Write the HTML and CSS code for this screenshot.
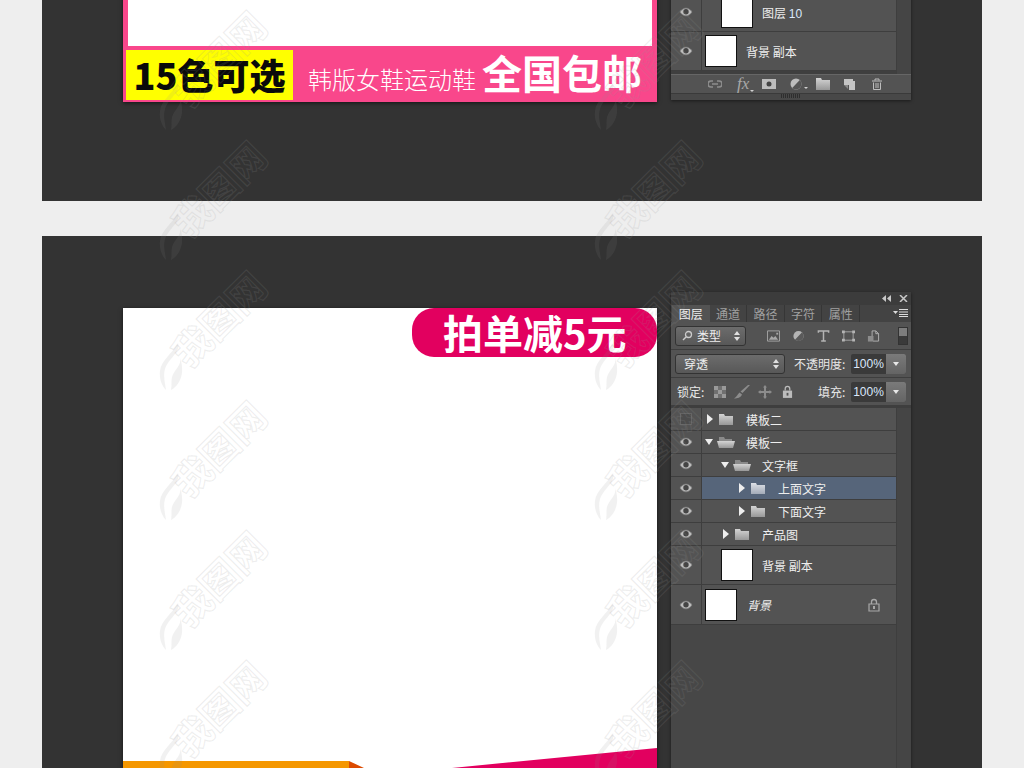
FILE: index.html
```html
<!DOCTYPE html>
<html lang="zh-CN">
<head>
  <meta charset="UTF-8" />
  <title>模板预览</title>
  <link rel="stylesheet" href="styles.css">
</head>
<body>

  <!-- Icons -->
  <svg class="sprite" xmlns="http://www.w3.org/2000/svg">
    <defs>
      <linearGradient id="folderFill" x1="0" y1="0" x2="0" y2="1"><stop offset="0" stop-color="#d4d4d4"/><stop offset="1" stop-color="#989898"/></linearGradient>
      <linearGradient id="folderBlue" x1="0" y1="0" x2="0" y2="1"><stop offset="0" stop-color="#dde0e6"/><stop offset="1" stop-color="#a3abb8"/></linearGradient>
    </defs>
    <symbol id="eye" viewBox="0 0 14 10">
      <path d="M1 5c1.800-2.600 3.800-3.800 6-3.800S11.200 2.400 13 5c-1.800 2.600-3.800 3.800-6 3.800S2.800 7.600 1 5z" fill="#bdbdbd" stroke="#858585" stroke-width=".8"/>
      <circle cx="7" cy="4.800" r="2.700" fill="#444"/>
    </symbol>
    <symbol id="folder" viewBox="0 0 18 13">
      <path d="M2 1h5l1 2h8v9H2z" fill="url(#folderFill)"/>
    </symbol>
    <symbol id="folderSel" viewBox="0 0 18 13">
      <path d="M2 1h5l1 2h8v9H2z" fill="url(#folderBlue)"/>
    </symbol>
    <symbol id="folderOpen" viewBox="0 0 18 13">
      <path d="M2 1h5l1 2h7v2H2z" fill="#8a8a8a"/>
      <path d="M0 5h18l-2 7H2z" fill="url(#folderFill)"/>
    </symbol>
    <symbol id="thumbLock" viewBox="0 0 12 14">
      <path d="M3.500 6V4a2.500 2.500 0 0 1 5 0v2" fill="none" stroke="#a8a8a8" stroke-width="1.300"/>
      <path d="M1 6h10v7H1z" fill="none" stroke="#a8a8a8" stroke-width="1.200"/>
      <rect x="5" y="8" width="2" height="3" fill="#a8a8a8"/>
    </symbol>
    <symbol id="flame" viewBox="0 0 24 50">
      <path d="M19 1C22 10 9 17 6 27c-2 7 0 13 1 21C3 44 0 37 1 29 2 18 14 11 19 1zM21 16c2 7-6 12-8 19-1 4 0 8-1 13 6-3 10-10 11-17 .5-6-.5-11-2-15z" fill="currentColor"/>
    </symbol>
  </svg>

  <!-- First artboard, scrolled past its top -->
  <section class="board board-top">
    <div class="canvas canvas-top">
      <div class="canvas-white"></div>
      <div class="promo-strip">
        <div class="promo-colors">15色可选</div>
        <div class="promo-sub">韩版女鞋运动鞋</div>
        <div class="promo-free">全国包邮</div>
      </div>
    </div>

    <div class="panel panel-top">
      <div class="layer-area">
        <div class="layer-list">
          <div class="row row-thumb">
            <div class="eye-col"><svg class="eye"><use href="#eye"/></svg></div>
            <div class="row-body indent-1"><div class="thumb"></div><span class="thumb-name">图层 <span class="digits">10</span></span></div>
          </div>
          <div class="row row-thumb">
            <div class="eye-col"><svg class="eye"><use href="#eye"/></svg></div>
            <div class="row-body"><div class="thumb"></div><span class="thumb-name">背景 副本</span></div>
          </div>
        </div>
        <div class="track"></div>
      </div>
      <div class="panel-footer">
        <svg class="foot-icon" viewBox="0 0 14 12"><path d="M5 3H3a3 3 0 0 0 0 6h2M9 3h2a3 3 0 0 1 0 6H9M4 6h6" fill="none" stroke="#8d8d8d" stroke-width="1.600"/></svg>
        <span class="foot-fx">fx<i class="caret"></i></span>
        <svg class="foot-icon" viewBox="0 0 14 12"><path d="M0 1h14v10H0z" fill="#bdbdbd"/><circle cx="7" cy="6" r="2.500" fill="#444"/></svg>
        <span class="foot-adjust"><svg class="foot-icon" viewBox="0 0 14 12"><circle cx="7" cy="6" r="5.500" fill="#bdbdbd"/><path d="M3.200 10 10.800 2a5.500 5.500 0 0 1-7.600 8z" fill="#555"/></svg><i class="caret"></i></span>
        <svg class="foot-icon" viewBox="0 0 14 12"><path d="M0 0h5l1 2h8v10H0z" fill="url(#folderFill)"/></svg>
        <svg class="foot-icon" viewBox="0 0 14 12"><path d="M1 1h9v2h2v9H6V7H1z" fill="#c4c4c4"/><path d="M1 7h4v4z" fill="#8a8a8a"/></svg>
        <svg class="foot-icon" viewBox="0 0 14 12"><path d="M2 3h10M5 2.500V1h4v1.500M3.500 4.500v7h7v-7M6 5v5M8 5v5" fill="none" stroke="#bdbdbd" stroke-width="1"/></svg>
        <span class="foot-resize"></span>
      </div>
      <div class="panel-grip"><span></span></div>
    </div>
  </section>

  <div class="board-gap"></div>

  <!-- Second artboard -->
  <section class="board board-main">
    <div class="canvas canvas-main">
      <div class="promo-pill">拍单减5元</div>
      <div class="canvas-ribbons">
        <svg class="ribbons" viewBox="0 0 534 20" preserveAspectRatio="none">
          <path d="M0 13h226v7H0z" fill="#f59700"/>
          <path d="M226 13l15 7h-15z" fill="#dc4a00"/>
          <path d="M329 20 534 0v20z" fill="#e2005f"/>
        </svg>
      </div>
    </div>

    <div class="panel panel-main">
      <div class="panel-title">
        <svg class="title-icon" viewBox="0 0 9 7"><path d="M4 0v7L0 3.500zM9 0v7L5 3.500z" fill="#c8c8c8"/></svg>
        <svg class="title-icon" viewBox="0 0 9 7"><path d="M1 0l7 7M8 0 1 7" stroke="#c8c8c8" stroke-width="1.500"/></svg>
      </div>

      <div class="tabs">
        <div class="tab tab-active">图层</div>
        <div class="tab">通道</div>
        <div class="tab">路径</div>
        <div class="tab">字符</div>
        <div class="tab">属性</div>
        <svg class="tab-menu" viewBox="0 0 15 8"><path d="M0 2h5L2.500 5z" fill="#ddd"/><path d="M6 .5h9M6 3h9M6 5.500h9M6 7.500h9" stroke="#ddd"/></svg>
      </div>

      <div class="tool-row">
        <div class="select select-kind">
          <svg class="search" viewBox="0 0 11 11"><circle cx="6.500" cy="4.500" r="3" fill="none" stroke="#ccc" stroke-width="1.300"/><path d="M4 7 1 10" stroke="#ccc" stroke-width="1.500"/></svg>
          <span>类型</span>
          <i class="updown"></i>
        </div>
        <div class="filter-icons">
          <svg viewBox="0 0 14 12"><path d="M.5.5h13v11H.5z" fill="none" stroke="#a8a8a8"/><path d="M2 10l3-4 2 2 2-2 3 4z" fill="#a8a8a8"/><path d="M10 2.500h2v2h-2z" fill="#a8a8a8"/></svg>
          <svg viewBox="0 0 14 12"><circle cx="7" cy="6" r="5.500" fill="#b4b4b4"/><path d="M3.200 10 10.800 2a5.500 5.500 0 0 1-7.600 8z" fill="#5a5a5a"/></svg>
          <svg viewBox="0 0 14 12"><path d="M1.500 2.500V.5h11v2M7 .5v11M4.500 11.500h5" fill="none" stroke="#b4b4b4" stroke-width="1.600"/></svg>
          <svg viewBox="0 0 14 12"><path d="M2 1.500h10v9H2z" fill="none" stroke="#a8a8a8"/><path d="M0 0h3v3H0zM11 0h3v3h-3zM0 9h3v3H0zM11 9h3v3h-3z" fill="#b4b4b4"/></svg>
          <svg viewBox="0 0 14 12"><path d="M5.500 6V.5h4l3 3v8h-6" fill="none" stroke="#b4b4b4"/><path d="M9.500.5v3h3" fill="none" stroke="#b4b4b4"/><path d="M1 6h6v6H1z" fill="#8c8c8c"/></svg>
        </div>
        <div class="filter-toggle"><i></i></div>
      </div>

      <div class="tool-row">
        <div class="select select-blend">
          <span>穿透</span>
          <i class="updown"></i>
        </div>
        <span class="field-label label-opacity">不透明度:</span>
        <div class="number-field"><span>100%</span><i class="field-btn"></i></div>
      </div>

      <div class="tool-row tool-row-lock">
        <span class="field-label label-lock">锁定:</span>
        <div class="lock-icons">
          <svg class="lock-checker" viewBox="0 0 12 12"><path d="M0 0h12v12H0z" fill="#707070"/><path d="M0 0h4v4H0zM8 0h4v4H8zM4 4h4v4H4zM0 8h4v4H0zM8 8h4v4H8z" fill="#9a9a9a"/></svg>
          <svg class="lock-brush" viewBox="0 0 16 14"><path d="M16 0 8.500 8 6.500 6.500 14 0zM5.500 7.500l2.500 2c-1 3-4.500 4-8 4 2.500-1 3.500-4.500 5.500-6z" fill="#8c8c8c"/></svg>
          <svg class="lock-move" viewBox="0 0 14 14"><path d="M7 0l2 2.500H8V6h3.500V5L14 7l-2.500 2V8H8v3.500h1L7 14l-2-2.500h1V8H2.500v1L0 7l2.500-2v1H6V2.500H5z" fill="#8c8c8c"/></svg>
          <svg class="lock-lock" viewBox="0 0 12 14"><path d="M3.500 6V4a2.500 2.500 0 0 1 5 0v2" fill="none" stroke="#bcbcbc" stroke-width="1.400"/><path d="M1 6h10v8H1z" fill="#bcbcbc"/><rect x="5" y="8.500" width="2" height="3" fill="#555"/></svg>
        </div>
        <span class="field-label label-fill">填充:</span>
        <div class="number-field"><span>100%</span><i class="field-btn"></i></div>
      </div>

      <div class="layer-area layer-area-main">
        <div class="layer-list">
          <div class="row">
            <div class="eye-col"><span class="eye-off"></span></div>
            <div class="row-body"><i class="arrow"></i><svg class="folder"><use href="#folder"/></svg><span class="name">模板二</span></div>
          </div>
          <div class="row">
            <div class="eye-col"><svg class="eye"><use href="#eye"/></svg></div>
            <div class="row-body"><i class="arrow arrow-open"></i><svg class="folder"><use href="#folderOpen"/></svg><span class="name">模板一</span></div>
          </div>
          <div class="row">
            <div class="eye-col"><svg class="eye"><use href="#eye"/></svg></div>
            <div class="row-body indent-1"><i class="arrow arrow-open"></i><svg class="folder"><use href="#folderOpen"/></svg><span class="name">文字框</span></div>
          </div>
          <div class="row">
            <div class="eye-col"><svg class="eye"><use href="#eye"/></svg></div>
            <div class="row-body indent-2 row-selected"><i class="arrow"></i><svg class="folder"><use href="#folderSel"/></svg><span class="name">上面文字</span></div>
          </div>
          <div class="row">
            <div class="eye-col"><svg class="eye"><use href="#eye"/></svg></div>
            <div class="row-body indent-2"><i class="arrow"></i><svg class="folder"><use href="#folder"/></svg><span class="name">下面文字</span></div>
          </div>
          <div class="row">
            <div class="eye-col"><svg class="eye"><use href="#eye"/></svg></div>
            <div class="row-body indent-1"><i class="arrow"></i><svg class="folder"><use href="#folder"/></svg><span class="name">产品图</span></div>
          </div>
          <div class="row row-thumb">
            <div class="eye-col"><svg class="eye"><use href="#eye"/></svg></div>
            <div class="row-body indent-1"><div class="thumb"></div><span class="thumb-name">背景 副本</span></div>
          </div>
          <div class="row row-thumb row-bg">
            <div class="eye-col"><svg class="eye"><use href="#eye"/></svg></div>
            <div class="row-body"><div class="thumb"></div><span class="thumb-name thumb-name-bg">背景</span><svg class="row-lock"><use href="#thumbLock"/></svg></div>
          </div>
        </div>
        <div class="track"></div>
      </div>
    </div>
  </section>

  <!-- Watermarks run over the whole page -->
  <div class="marks">
    <div class="mark"><span>我图网</span><svg class="mark-flame"><use href="#flame"/></svg></div>
    <div class="mark"><span>我图网</span><svg class="mark-flame"><use href="#flame"/></svg></div>
    <div class="mark"><span>我图网</span><svg class="mark-flame"><use href="#flame"/></svg></div>
    <div class="mark"><span>我图网</span><svg class="mark-flame"><use href="#flame"/></svg></div>
    <div class="mark"><span>我图网</span><svg class="mark-flame"><use href="#flame"/></svg></div>
    <div class="mark"><span>我图网</span><svg class="mark-flame"><use href="#flame"/></svg></div>
    <div class="mark"><span>我图网</span><svg class="mark-flame"><use href="#flame"/></svg></div>
    <div class="mark"><span>我图网</span><svg class="mark-flame"><use href="#flame"/></svg></div>
    <div class="mark"><span>我图网</span><svg class="mark-flame"><use href="#flame"/></svg></div>
    <div class="mark"><span>我图网</span><svg class="mark-flame"><use href="#flame"/></svg></div>
    <div class="mark"><span>我图网</span><svg class="mark-flame"><use href="#flame"/></svg></div>
    <div class="mark"><span>我图网</span><svg class="mark-flame"><use href="#flame"/></svg></div>
  </div>

</body>
</html>
```

FILE: styles.css
```css
* {
  box-sizing: border-box;
}

html, body {
  margin: 0;
  padding: 0;
  height: 768px;
  overflow: hidden;
  background: #eeeeee;
  font-family: "Noto Sans CJK SC", "Noto Sans", sans-serif;
}

.sprite {
  width: 0;
  height: 0;
  position: absolute;
}

/* Artboards */
.board {
  margin: 0 42px;
  width: 940px;
  background: #333333;
  display: flex;
  padding-left: 81px;
  gap: 14px;
  overflow: hidden;
}

.board-top {
  height: 201px;
  align-items: flex-end;
  padding-bottom: 99px;
}

.board-gap {
  height: 35px;
}

.board-main {
  height: 532px;
  align-items: flex-start;
  padding-top: 56px;
}

/* Canvas */
.canvas {
  width: 534px;
  flex-shrink: 0;
  box-shadow: 0 1px 4px rgba(0, 0, 0, 0.6);
}

.canvas-top {
  background: #f9478b;
  padding: 0 5px;
}

.canvas-white {
  height: 60px;
  background: #ffffff;
}

.promo-strip {
  height: 56px;
  margin-left: -2px;
  padding-top: 4px;
  display: flex;
  align-items: flex-start;
}

.promo-colors {
  width: 167px;
  height: 50px;
  background: #ffff00;
  color: #0a0a0a;
  font-weight: 900;
  font-size: 36px;
  line-height: 48px;
  text-align: center;
  white-space: nowrap;
}

.promo-sub {
  margin-left: 15px;
  margin-top: 12px;
  font-size: 24px;
  line-height: 34px;
  font-weight: 300;
  color: #ffffff;
  white-space: nowrap;
}

.promo-free {
  margin-left: 6px;
  margin-top: -3px;
  font-size: 40px;
  line-height: 50px;
  font-weight: 700;
  color: #ffffff;
  white-space: nowrap;
}

.canvas-main {
  margin-top: 16px;
  height: 460px;
  background: #ffffff;
  display: flex;
  flex-direction: column;
  justify-content: space-between;
  align-items: flex-end;
}

.promo-pill {
  width: 245px;
  height: 49px;
  background: #e2005f;
  border-radius: 22px;
  color: #ffffff;
  font-weight: 700;
  font-size: 40px;
  line-height: 48px;
  padding-left: 31px;
  white-space: nowrap;
}

.canvas-ribbons {
  width: 534px;
  height: 20px;
}

.ribbons {
  display: block;
  width: 534px;
  height: 20px;
}

/* Layers panel */
.panel {
  width: 240px;
  flex-shrink: 0;
  background: #535353;
  color: #eeeeee;
  font-size: 12px;
  box-shadow: 0 1px 3px rgba(0, 0, 0, 0.5);
  display: flex;
  flex-direction: column;
}

.panel-top {
  margin-bottom: 2px;
}

.panel-main {
  height: 490px;
}

.panel-title {
  height: 13px;
  background: #3c3c3c;
  display: flex;
  justify-content: flex-end;
  align-items: center;
  gap: 8px;
  padding-right: 3px;
}

.title-icon {
  width: 9px;
  height: 7px;
}

.tabs {
  height: 17px;
  background: #434343;
  display: flex;
  align-items: stretch;
  padding-left: 1px;
}

.tab {
  width: 37.600px;
  color: #a0a0a0;
  line-height: 17px;
  text-align: center;
  border-right: 1px solid #363636;
}

.tab-active {
  background: #535353;
  color: #f0f0f0;
  border-right: none;
}

.tab-menu {
  width: 15px;
  height: 8px;
  margin: 4px 3px 0 auto;
}

.tool-row {
  height: 28px;
  display: flex;
  align-items: center;
  padding-left: 4px;
  border-bottom: 1px solid #3e3e3e;
}

.tool-row-lock {
  height: 30px;
  padding-left: 6px;
  border-bottom: 3px solid #3e3e3e;
}

.select {
  height: 20px;
  display: flex;
  align-items: center;
  background: linear-gradient(#6c6c6c, #585858);
  border: 1px solid #333333;
  border-radius: 3px;
  position: relative;
}

.select-kind {
  width: 71px;
  padding-left: 6px;
}

.search {
  width: 11px;
  height: 11px;
  margin-right: 4px;
}

.select-blend {
  width: 110px;
  padding-left: 8px;
}

.updown {
  position: absolute;
  right: 5px;
  top: 4px;
  width: 0;
  height: 0;
  border: 3px solid transparent;
  border-top: none;
  border-bottom: 4px solid #e0e0e0;
}

.updown::after {
  content: "";
  position: absolute;
  left: -3px;
  top: 6px;
  border: 3px solid transparent;
  border-bottom: none;
  border-top: 4px solid #e0e0e0;
}

.filter-icons {
  display: flex;
  gap: 12px;
  margin-left: 21px;
  width: 114px;
}

.filter-icons svg {
  width: 13px;
  height: 12px;
  flex-shrink: 0;
}

.filter-toggle {
  width: 10px;
  height: 18px;
  margin-left: 17px;
  background: #3a3a3a;
  border: 1px solid #333333;
}

.filter-toggle i {
  display: block;
  height: 8px;
  background: #7d7d7d;
}

.field-label {
  color: #e8e8e8;
  white-space: nowrap;
}

.label-opacity {
  margin-left: 9px;
  width: 57px;
}

.label-lock {
  width: 37px;
  flex-shrink: 0;
}

.label-fill {
  margin-left: 14px;
  width: 33px;
  flex-shrink: 0;
}

.lock-icons {
  display: flex;
  align-items: center;
  gap: 8px;
  width: 90px;
  flex-shrink: 0;
}

.lock-checker {
  width: 12px;
  height: 12px;
}

.lock-brush {
  width: 16px;
  height: 14px;
}

.lock-move {
  width: 14px;
  height: 14px;
}

.lock-lock {
  width: 11px;
  height: 13px;
  margin-left: 2px;
}

.number-field {
  width: 55px;
  height: 20px;
  display: flex;
  flex-shrink: 0;
  background: #3a3a3a;
  border-radius: 2px;
  overflow: hidden;
}

.number-field span {
  width: 35px;
  text-align: center;
  line-height: 20px;
  color: #dbe8fb;
  font-size: 12px;
  font-family: "Liberation Sans", sans-serif;
}

.field-btn {
  width: 20px;
  background: linear-gradient(#7a7a7a, #646464);
  position: relative;
}

.field-btn::after {
  content: "";
  position: absolute;
  left: 7px;
  top: 8px;
  border: 3px solid transparent;
  border-bottom: none;
  border-top: 4px solid #e8e8e8;
}

.layer-area {
  display: flex;
}

.layer-area-main {
  flex: 1;
}

.layer-list {
  width: 225px;
  background: #474747;
}

.track {
  width: 15px;
  background: #454545;
  border-left: 1px solid #3e3e3e;
}

.panel-top .layer-list {
  margin-bottom: 3px;
}

.panel-top .layer-area {
  background: #3f3f3f;
}

.row {
  display: flex;
  height: 23px;
  background: #535353;
  border-bottom: 1px solid #3e3e3e;
}

.row-thumb {
  height: 39px;
}

.row-bg {
  height: 40px;
}

.eye-col {
  width: 31px;
  display: flex;
  align-items: center;
  justify-content: center;
  border-right: 1px solid #3e3e3e;
}

.eye {
  width: 14px;
  height: 10px;
}

.eye-off {
  width: 12px;
  height: 12px;
  border: 1px solid #646464;
  background: #4c4c4c;
}

.row-body {
  flex: 1;
  display: flex;
  align-items: center;
  padding-left: 3px;
}

.row-selected {
  background: #56657a;
}

.indent-1 {
  padding-left: 19px;
}

.indent-2 {
  padding-left: 35px;
}

.arrow {
  width: 12px;
  height: 10px;
  position: relative;
  flex-shrink: 0;
}

.arrow::before {
  content: "";
  position: absolute;
  left: 2px;
  top: 0;
  border: 5px solid transparent;
  border-right: none;
  border-left: 6px solid #eeeeee;
}

.arrow-open::before {
  left: 0;
  top: 2px;
  border: 4.500px solid transparent;
  border-bottom: none;
  border-top: 6px solid #eeeeee;
}

.folder {
  width: 18px;
  height: 13px;
  flex-shrink: 0;
}

.name {
  margin-left: 11px;
  white-space: nowrap;
}

.thumb {
  width: 32px;
  height: 32px;
  background: #ffffff;
  border: 1px solid #111111;
}

.thumb-name {
  margin-left: 9px;
  white-space: nowrap;
}

.digits {
  color: #dbe8fb;
  font-family: "Liberation Sans", sans-serif;
}

.thumb-name-bg {
  font-style: italic;
  font-size: 12px;
  margin-left: 10px;
}

.row-lock {
  width: 12px;
  height: 14px;
  margin-left: auto;
  margin-right: 16px;
}

/* Panel footer */
.panel-footer {
  height: 19px;
  display: flex;
  align-items: center;
  padding-left: 37px;
  border-top: 1px solid #666666;
}

.panel-footer > * {
  width: 27px;
  flex-shrink: 0;
}

.foot-icon {
  width: 14px;
  height: 12px;
  margin-right: 13px;
}

.panel-footer > .foot-icon {
  width: 14px;
}

.foot-fx {
  padding-left: 2px;
  font-family: "Liberation Serif", serif;
  font-style: italic;
  font-size: 17px;
  line-height: 18px;
  color: #a8a8a8;
  position: relative;
}

.foot-adjust {
  position: relative;
  display: flex;
}

.caret {
  position: absolute;
  left: 15px;
  bottom: 1px;
  border: 2px solid transparent;
  border-bottom: none;
  border-top: 2px solid #d0d0d0;
}

.foot-resize {
  width: 10px;
  height: 10px;
  margin-left: 2px;
  background-image: radial-gradient(#8a8a8a 35%, transparent 40%);
  background-size: 2px 2px;
  clip-path: polygon(100% 0, 100% 100%, 0 100%);
}

.panel-grip {
  height: 7px;
  background: #484848;
  border-top: 1px solid #3a3a3a;
  display: flex;
  justify-content: center;
}

.panel-grip span {
  width: 20px;
  height: 4px;
  background: repeating-linear-gradient(90deg, #2e2e2e 0 1px, transparent 1px 2px);
}

/* Watermarks */
.marks {
  position: absolute;
  top: 8px;
  left: 158px;
  display: grid;
  grid-template-columns: repeat(2, 435px);
  grid-auto-rows: 130px;
  pointer-events: none;
}

.mark {
  position: relative;
  width: 105px;
  height: 118px;
  color: rgba(140, 140, 140, 0.12);
}

.mark span {
  position: absolute;
  left: 3px;
  top: 30px;
  font-size: 38px;
  line-height: 40px;
  font-weight: 700;
  white-space: nowrap;
  color: transparent;
  -webkit-text-stroke: 1.2px rgba(150, 150, 150, 0.16);
  transform: rotate(-45deg);
}

.mark-flame {
  position: absolute;
  left: 1px;
  bottom: -6px;
  width: 24px;
  height: 50px;
}
```
